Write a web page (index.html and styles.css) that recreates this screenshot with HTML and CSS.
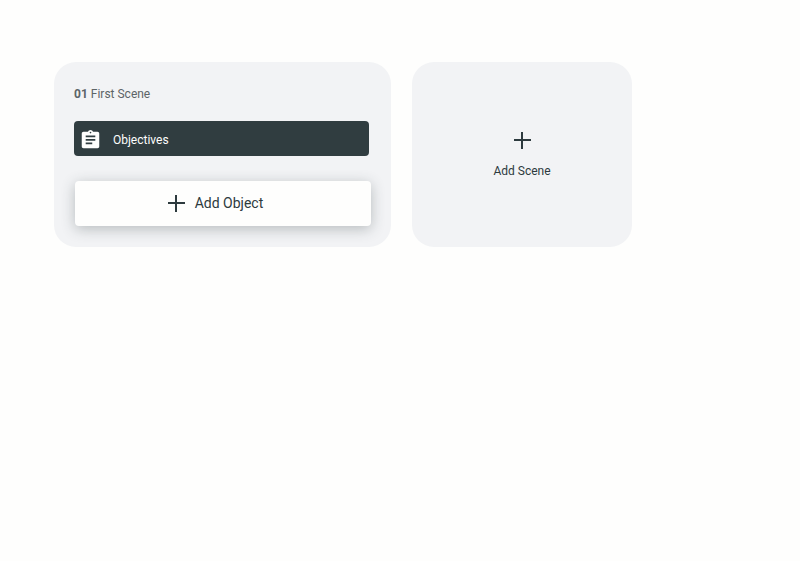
FILE: index.html
```html
<!DOCTYPE html>
<html lang="en">
<head>
<meta charset="utf-8">
<meta name="viewport" content="width=device-width, initial-scale=1">
<title>Scenes</title>
<link rel="stylesheet" href="styles.css">
</head>
<body>
<main class="board">
  <section class="scene">
    <h2 class="scene-title"><strong>01</strong> First Scene</h2>
    <button class="objectives" type="button">
      <svg class="clipboard" viewBox="0 0 24 24" aria-hidden="true"><path fill="currentColor" d="M20 3h-5.180C14.400 1.840 13.300 1 12 1s-2.400.840-2.820 2H4c-1.100 0-2 .900-2 2v15c0 1.100.900 2 2 2h16c1.100 0 2-.900 2-2V5c0-1.100-.900-2-2-2zm-8 0c.550 0 1 .450 1 1s-.450 1-1 1-1-.450-1-1 .450-1 1-1zm2 14.500H6.500v-2H14v2zm3.500-4h-11v-2h11v2zm0-4h-11v-2h11v2z"/></svg>
      <span>Objectives</span>
    </button>
    <button class="add-object" type="button">
      <svg class="plus" viewBox="0 0 18 18" aria-hidden="true"><path d="M9 1v17M1 9h17"/></svg>
      <span>Add Object</span>
    </button>
  </section>
  <button class="add-scene" type="button">
    <svg class="plus" viewBox="0 0 18 18" aria-hidden="true"><path d="M9 1v17M1 9h17"/></svg>
    <span>Add Scene</span>
  </button>
</main>
</body>
</html>
```
FILE: styles.css
```css
* { box-sizing: border-box; }
body {
  margin: 0;
  background: #fefefd;
  color: #2d3a3e;
  font-family: Roboto, "Liberation Sans", sans-serif;
  font-size: 12px;
  line-height: 20px;
}
button {
  border: 0;
  font: inherit;
  color: inherit;
  cursor: pointer;
}
.board {
  display: grid;
  grid-template-columns: 337fr 220fr;
  gap: 21px;
  padding: 62px 168px 62px 54px;
}
.scene,
.add-scene {
  border-radius: 22px;
  background: #f2f3f5;
}
.scene {
  display: flex;
  flex-direction: column;
  padding: 22px 20px 21px;
}
.scene-title {
  margin: 0 0 17px;
  font-size: 12px;
  font-weight: 400;
  color: #5c6467;
}
.objectives {
  display: flex;
  align-items: center;
  gap: 12px;
  height: 35px;
  margin: 0 2px 25px 0;
  padding: 2px 6px 0;
  border-radius: 4px;
  background: #303d40;
  color: #fefefd;
}
.clipboard {
  width: 21px;
  height: 21px;
}
.add-object {
  display: flex;
  align-items: center;
  justify-content: center;
  gap: 10px;
  height: 45px;
  margin-left: 1px;
  padding: 0 16px 2px 0;
  border-radius: 4px;
  background: #fefefd;
  box-shadow: 0 3px 14px rgba(45, 58, 62, 0.3);
  font-size: 14px;
}
.plus {
  width: 18px;
  height: 18px;
  fill: none;
  stroke: currentColor;
  stroke-width: 2;
}
.add-scene {
  display: flex;
  flex-direction: column;
  align-items: center;
  justify-content: center;
  gap: 12px;
  padding: 3px 0 0;
}
```
